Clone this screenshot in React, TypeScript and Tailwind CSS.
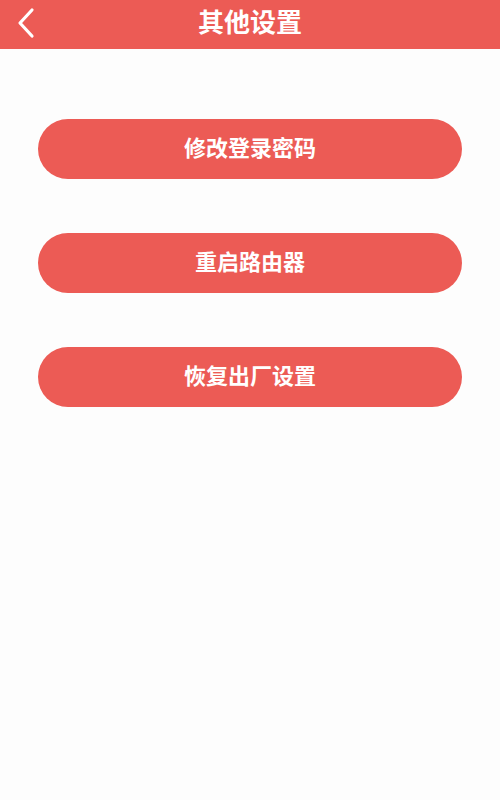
const items = ['修改登录密码', '重启路由器', '恢复出厂设置'];

export default function App() {
  return (
    <div
      className="w-[500px] h-[800px] bg-[#fdfdfd] flex flex-col"
      style={{ fontFamily: '"Noto Sans CJK SC", "Noto Sans", sans-serif' }}
    >
      {/* Header */}
      <div className="h-[49px] bg-[#ec5b55] flex items-center relative">
        <svg className="absolute left-[14px] top-[6px]" width="26" height="34" viewBox="0 0 26 34">
          <polyline
            points="18,4 6,17 18,30"
            fill="none"
            stroke="#fff"
            strokeWidth="3.2"
            strokeLinecap="round"
            strokeLinejoin="round"
          />
        </svg>
        <div className="flex-1 text-center text-white text-[26px] font-bold leading-none pb-[8px]">其他设置</div>
      </div>

      {/* Buttons */}
      <div className="flex flex-col gap-[54px] px-[38px] pt-[70px]">
        {items.map((label) => (
          <button
            key={label}
            className="h-[60px] w-full rounded-full bg-[#ec5b55] text-white text-[22px] font-bold leading-none pb-[6px] flex items-center justify-center"
          >
            {label}
          </button>
        ))}
      </div>
    </div>
  );
}
